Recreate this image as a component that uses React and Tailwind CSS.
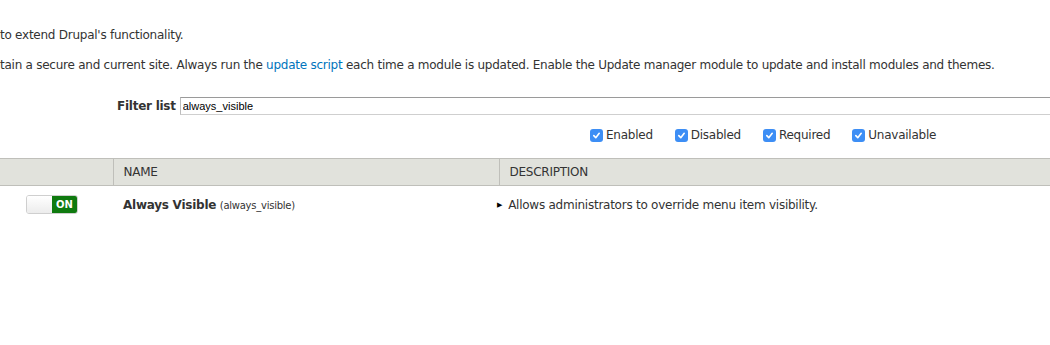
import React, { useState } from 'react';

const filters = ['Enabled', 'Disabled', 'Required', 'Unavailable'];

// Small mac-style checked checkbox
const Check = () => (
  <span className="inline-flex h-[13px] w-[13px] items-center justify-center rounded-[3px] bg-[#3d8ef5]">
    <svg width="9" height="9" viewBox="0 0 10 10">
      <path d="M2 5.2 L4.2 7.4 L8 2.6" fill="none" stroke="white" strokeWidth="1.8" strokeLinecap="round" strokeLinejoin="round" />
    </svg>
  </span>
);

const App = () => {
  const [query, setQuery] = useState('always_visible'); // filter input

  return (
    <div className="h-[345px] w-[1050px] overflow-hidden bg-white text-[12px] tracking-[-0.25px] text-[#333]" style={{ fontFamily: '"DejaVu Sans", "Noto Sans", sans-serif' }}>
      {/* Intro text */}
      <p className="mt-[27px] leading-[16px] whitespace-nowrap">to extend Drupal's functionality.</p>
      <p className="mt-[14px] leading-[16px] whitespace-nowrap">
        tain a secure and current site. Always run the{' '}
        <a href="#" className="text-[#0074bd]">update script</a> each time a module is updated. Enable the Update manager module to update and install modules and themes.
      </p>

      {/* Filter list */}
      <div className="mt-[24px] flex items-center pl-[117px]">
        <label htmlFor="filter" className="mr-[4px] font-bold">Filter list</label>
        <input
          id="filter"
          type="text"
          value={query}
          onChange={(e) => setQuery(e.target.value)}
          className="h-[18px] flex-1 border border-t-[#9a9a9a] border-r-0 border-b-[#cfcfcf] border-l-[#bdbdbd] px-[2px] text-[11px] tracking-normal text-black outline-none"
          style={{ fontFamily: '"Liberation Sans", Arial, sans-serif' }}
        />
      </div>

      {/* Status checkboxes */}
      <div className="mt-[11px] flex items-center pl-[590px]">
        {filters.map((f) => (
          <label key={f} className="mr-[22px] flex items-center gap-[3px]">
            <Check />
            <span>{f}</span>
          </label>
        ))}
      </div>

      {/* Modules table */}
      <table className="mt-[14px] w-full border-collapse text-left">
        <thead>
          <tr className="h-[27px] border-y border-[#bfbfba] bg-[#e1e2dc]">
            <th className="w-[113px] border-r border-[#bfbfba] p-0"></th>
            <th className="w-[386px] border-r border-[#bfbfba] px-[10px] font-normal">NAME</th>
            <th className="px-[10px] font-normal">DESCRIPTION</th>
          </tr>
        </thead>
        <tbody>
          <tr className="h-[38px]">
            <td className="p-0">
              <div className="ml-[26px] flex h-[19px] w-[52px] overflow-hidden rounded-[3px] border border-[#cfcfcf]">
                <span className="flex-1 bg-gradient-to-b from-[#ffffff] to-[#ececec]"></span>
                <span className="flex w-[25px] items-center justify-center bg-[#0f7a0f] text-[10px] font-bold tracking-normal text-white">ON</span>
              </div>
            </td>
            <td className="px-[10px]">
              <span className="font-bold">Always Visible</span>{' '}
              <span className="text-[10px]">(always_visible)</span>
            </td>
            <td className="pl-0">
              <span className="flex items-center">
                <span className="mr-[6px] ml-[-2px] text-[7px] text-black">▶</span>
                Allows administrators to override menu item visibility.
              </span>
            </td>
          </tr>
        </tbody>
      </table>
    </div>
  );
};

export default App;
